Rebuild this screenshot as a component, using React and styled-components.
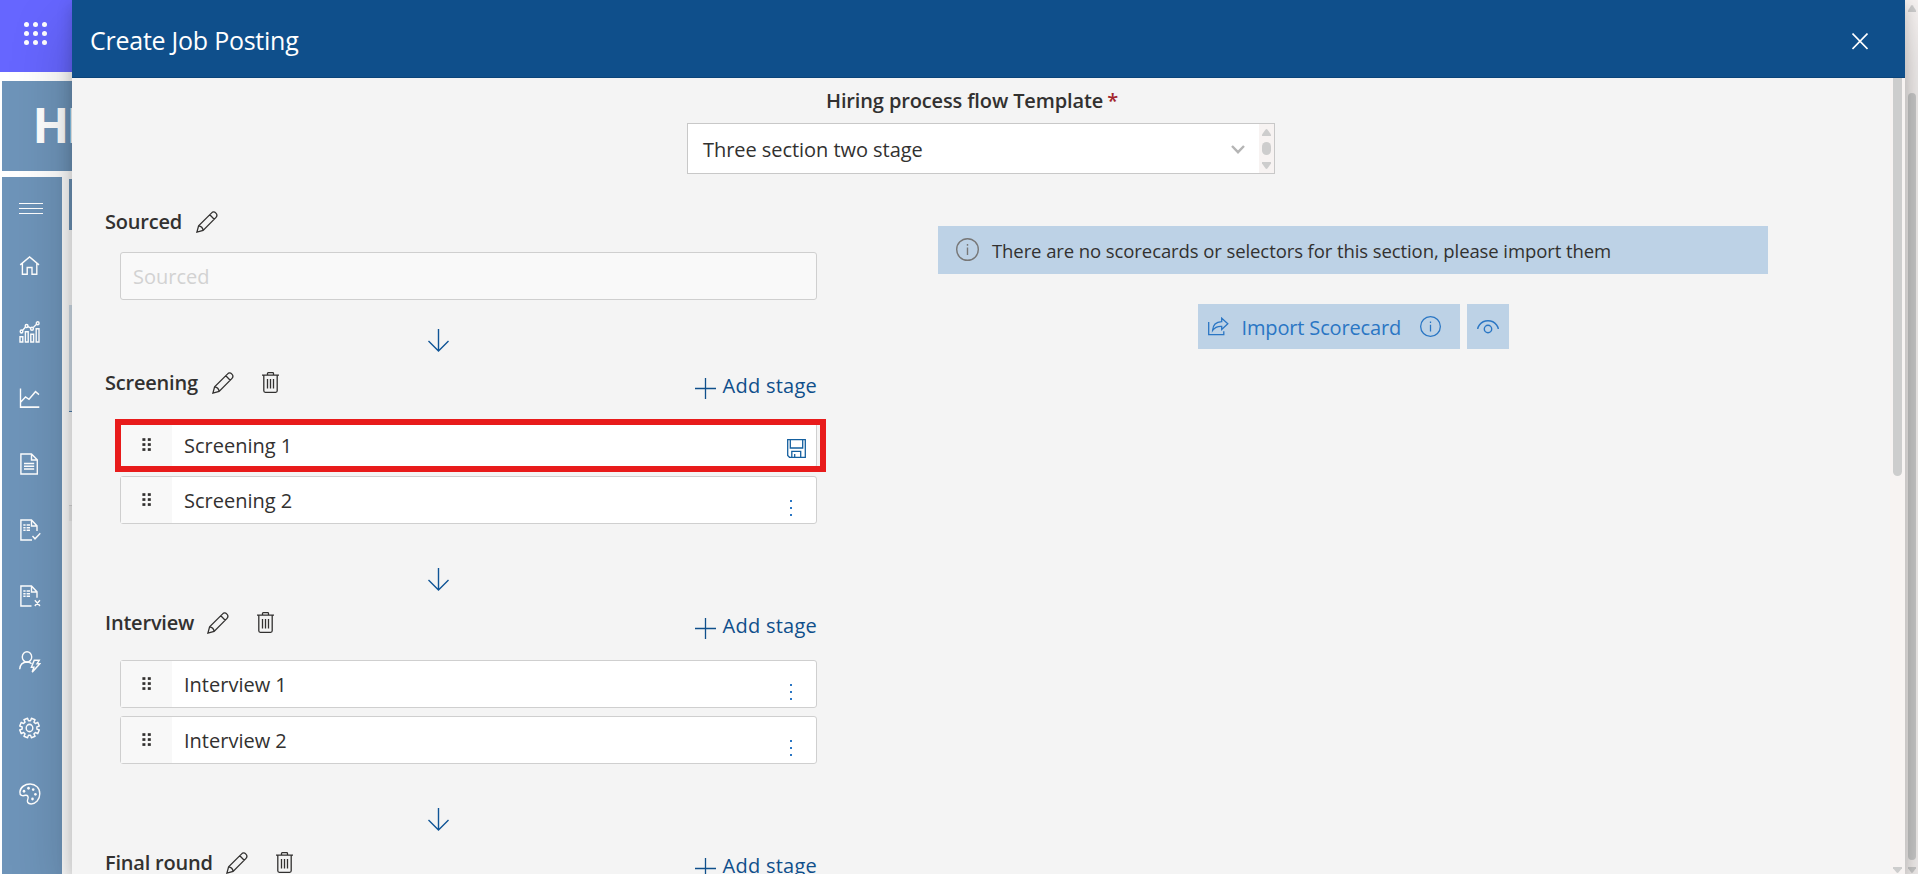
import React from 'react';
import styled, { createGlobalStyle } from 'styled-components';

const GlobalStyle = createGlobalStyle`
  *, *::before, *::after { box-sizing: border-box; }
  body {
    margin: 0;
    background: #fff;
    color: #323130;
    font-family: "Open Sans", "Noto Sans", sans-serif;
    font-size: 20px;
    overflow: hidden;
  }
  svg { display: block; flex: none; }
`;

/* ---------- page behind the panel ---------- */

const Page = styled.div`
  position: relative;
  width: 1918px;
  height: 874px;
  overflow: hidden;
  display: flex;
  justify-content: space-between;
`;

const Backdrop = styled.div`
  width: 84px;
  display: flex;
  flex-direction: column;
`;

const Launcher = styled.div`
  height: 72px;
  padding: 22px 0 0 24px;
  background: #6666ff;
`;

const Brand = styled.div`
  height: 90px;
  margin: 9px 0 6px 2px;
  padding-left: 30.5px;
  background: #6e94b9;
  color: #fff;
  font-weight: 700;
  font-size: 48px;
  line-height: 87px;
  letter-spacing: -3px;
  white-space: nowrap;
  overflow: hidden;
`;

const BackRow = styled.div`
  flex: 1;
  display: flex;
  gap: 7px;
  padding-left: 2px;
`;

const Nav = styled.nav`
  width: 60px;
  padding-left: 16px;
  background: #6e94b9;
  color: #fff;
  display: flex;
  flex-direction: column;
`;

const NavItem = styled.div`
  height: 66px;
  display: flex;
  align-items: center;
`;

const MenuToggle = styled(NavItem)`
  height: 56px;
  padding-top: 6px;
`;

const Sliver = styled.div`
  width: 15px;
  padding-top: 2px;
`;

const SliverBlock = styled.div`
  height: ${(p) => p.$height}px;
  background: ${(p) => p.$color || 'transparent'};
`;

/* ---------- scroll bars ---------- */

const Track = styled.div`
  width: ${(p) => p.$width}px;
  padding: ${(p) => p.$padding};
  background: #f7f3f2;
  display: flex;
  flex-direction: column;
  align-items: center;
  flex: none;
`;

const Thumb = styled.div`
  width: ${(p) => p.$width}px;
  height: ${(p) => p.$height}px;
  margin: ${(p) => p.$margin || 0};
  border-radius: ${(p) => p.$radius || '5px'};
  background: #cdcdcd;
`;

const Caret = ({ up, width = 8, height = 7 }) => (
  <svg width={width} height={height} viewBox="0 0 8 7" preserveAspectRatio="none" fill="#cdcdcd">
    {up ? <path d="M3.2 .5Q4-.5 4.8.5L8 5.5V7H0V5.5Z" /> : <path d="M0 0H8V1.5L4.8 6.5Q4 7.4 3.2 6.5L0 1.5Z" />}
  </svg>
);

/* ---------- panel ---------- */

const Panel = styled.section`
  position: absolute;
  top: 0;
  bottom: 0;
  left: 72px;
  right: 13px;
  background: #f4f4f4;
  box-shadow: 0 25.6px 57.6px rgba(0, 0, 0, 0.22), 0 4.8px 14.4px rgba(0, 0, 0, 0.18);
  display: flex;
  flex-direction: column;
`;

const PanelHeader = styled.header`
  height: 78px;
  padding: 5px 37px 0 18px;
  background: #0f4f8b;
  border-bottom: 1px solid #0b4479;
  color: #fff;
  display: flex;
  align-items: center;
  justify-content: space-between;
  flex: none;
`;

const Title = styled.h1`
  margin: 0 0 3px;
  font-weight: 400;
  font-size: 25px;
  line-height: 34px;
  letter-spacing: -0.25px;
`;

const PanelBody = styled.div`
  flex: 1;
  min-height: 0;
  display: flex;
`;

const Content = styled.div`
  flex: 1;
  overflow: hidden;
`;

const TemplateField = styled.div`
  width: 588px;
  margin-left: 615px;
  padding-top: 7px;
`;

const FieldLabel = styled.div`
  height: 38px;
  padding-left: 139px;
  font-weight: 600;
  line-height: 32px;
  letter-spacing: -0.13px;
  white-space: nowrap;

  span { color: #a4262c; margin-left: -1px; }
`;

const Select = styled.div`
  height: 51px;
  padding-left: 15px;
  border: 1px solid #c8c8c8;
  background: #fff;
  display: flex;
  align-items: stretch;
  letter-spacing: -0.05px;
  line-height: 52px;
`;

const SelectArrow = styled.div`
  margin-left: auto;
  padding: 21px 14px 0 0;
`;

const Columns = styled.div`
  display: flex;
  gap: 121px;
  padding: 32px 0 0 33px;
`;

const Stages = styled.div`
  width: 712px;
`;

const SectionHeader = styled.div`
  height: 31px;
  display: flex;
  align-items: center;
`;

const SectionName = styled.h2`
  margin: 0 14px 0 0;
  width: ${(p) => p.$width}px;
  font-weight: 600;
  font-size: 20px;
  line-height: 30px;
  letter-spacing: -0.2px;
  white-space: nowrap;
`;

const TrashSlot = styled.span`
  margin-left: 28px;
`;

const AddStage = styled.button`
  margin-left: auto;
  padding: 7px 0 0;
  border: 0;
  background: none;
  color: #0f4f8b;
  font: inherit;
  line-height: 30px;
  letter-spacing: 0.25px;
  display: flex;
  align-items: center;
  gap: 7px;

  svg { margin-top: 5px; }
`;

const StageList = styled.div`
  margin: 22px 0 0 15px;
  display: flex;
  flex-direction: column;
  gap: 8px;
`;

const StageRow = styled.div`
  position: relative;
  height: 48px;
  border: 1px solid #cfcfcf;
  border-radius: 3px;
  background: #fff;
  display: flex;
  line-height: ${(p) => (p.$editing ? 49 : 47)}px;
`;

const Grip = styled.div`
  width: 51px;
  margin-right: 12px;
  padding: ${(p) => (p.$editing ? 17 : 16)}px 0 0 21px;
  background: #f8f8f8;
`;

const StageAction = styled.div`
  margin-left: auto;
  padding: ${(p) => p.$padding};
`;

const Highlight = styled.div`
  position: absolute;
  top: -2px;
  left: -6px;
  width: 711px;
  height: 53px;
  border: 6px solid #e81b1b;
`;

const SourcedInput = styled.div`
  height: 48px;
  margin: 15px 0 0 15px;
  padding-left: 12px;
  border: 1px solid #cfcfcf;
  border-radius: 3px;
  background: #f9f9f9;
  color: #d2d2d2;
  line-height: 47px;
`;

const FlowArrow = styled.div`
  padding: ${(p) => p.$top}px 0 ${(p) => p.$bottom}px 323px;
`;

const Scorecards = styled.div`
  width: 830px;
  padding-top: 20px;
`;

const Notice = styled.div`
  height: 48px;
  padding-left: 18px;
  background: #bdd2e6;
  font-size: 18.5px;
  line-height: 49px;
  letter-spacing: -0.09px;
  white-space: nowrap;
  display: flex;
  gap: 13px;

  svg { margin-top: 12px; }
`;

const Actions = styled.div`
  margin-top: 30px;
  display: flex;
  justify-content: center;
  gap: 7px;
`;

const ActionButton = styled.button`
  width: ${(p) => p.$width}px;
  height: 45px;
  padding: 0 0 0 10px;
  border: 0;
  background: #bdd2e6;
  color: #2a76c4;
  font: inherit;
  letter-spacing: -0.15px;
  white-space: nowrap;
  display: flex;
  align-items: center;
`;

const ActionText = styled.span`
  margin: 3px 19px 0 13px;
  line-height: 30px;
`;

/* ---------- icons ---------- */

const Icon = ({ w, h, sw = 1.4, children }) => (
  <svg width={w} height={h} viewBox={`0 0 ${w} ${h}`} fill="none" stroke="currentColor" strokeWidth={sw}>
    {children}
  </svg>
);

const Waffle = () => (
  <svg width="23" height="23" fill="#fff">
    {[2.5, 11.5, 20.5].map((y) => [2.5, 11.5, 20.5].map((x) => <circle key={`${x}-${y}`} cx={x} cy={y} r="2.5" />))}
  </svg>
);

const Pencil = () => (
  <Icon w={22} h={22} sw={1.3}>
    <path d="M.9 21.1L2.6 14.9L15.4 2.1Q17.6-.2 19.9 2.1Q22 4.3 19.8 6.6L7.1 19.4ZM2.6 14.9Q6.6 15.4 7.1 19.4M13.8 3.8L18.2 8.2" />
  </Icon>
);

const Trash = () => (
  <Icon w={17} h={21} sw={1.3}>
    <path d="M0 3.2H17M5.5 3V1.5Q5.5.7 6.3.7H10.7Q11.5.7 11.5 1.5V3M1.8 3.2V18.8Q1.8 20.3 3.3 20.3H13.7Q15.2 20.3 15.2 18.8V3.2M5.5 7V16.5M8.5 7V16.5M11.5 7V16.5" />
  </Icon>
);

const Plus = () => (
  <Icon w={21} h={21} sw={1.3}><path d="M10.5 0V21M0 10.5H21" /></Icon>
);

const DownArrow = () => (
  <svg width="21" height="23" fill="none" stroke="#0f5496" strokeWidth="1.4">
    <path d="M10.5 0V22M.5 12L10.5 22L20.5 12" />
  </svg>
);

const GripDots = () => (
  <svg width="10" height="14" fill="#323130">
    {[0.2, 5.2, 10.2].map((y) => [0.4, 5.8].map((x) => <rect key={`${x}-${y}`} x={x} y={y} width="3" height="2.7" />))}
  </svg>
);

const More = () => (
  <svg width="2" height="16" fill="#2a76c4">
    <path d="M0 0H2V2H0ZM0 7H2V9H0ZM0 14H2V16H0Z" />
  </svg>
);

const Save = () => (
  <svg width="19" height="19" fill="none" stroke="#15609f" strokeWidth="1.3">
    <path d="M.7.7H18.3V18.3H2.5L.7 16.5ZM3.3.7V9H15.7V.7M4.8 18.3V12.3H13.7V18.3M7.7 15V18.3" />
  </svg>
);

const Info = ({ size, color }) => (
  <svg width={size} height={size} viewBox="0 0 23 23" fill="none" stroke={color} strokeWidth="1.4">
    <circle cx="11.5" cy="11.5" r="10.8" />
    <path d="M11.5 9.5V17M11.5 6V7.8" />
  </svg>
);

const Share = () => (
  <Icon w={21} h={19} sw={1.3}>
    <path d="M.7 5V17.7H15.8V14.2M4.6 13.4Q5 5.2 13.7 4.7V1.2L19.8 6.8L13.7 12.4V9.3Q7.5 9 4.6 13.4Z" />
  </Icon>
);

const Eye = () => (
  <Icon w={22} h={14} sw={1.4}>
    <path d="M.7 9Q1 6.8 2.4 5Q5.6.8 11 .8T19.6 5Q21 6.8 21.3 9" />
    <circle cx="11" cy="9" r="3.7" />
  </Icon>
);

const gearPath = (() => {
  const pts = [];
  for (let i = 0; i < 8; i += 1) {
    const a = (i * Math.PI) / 4 + Math.PI / 8;
    [[-0.25, 7.4], [-0.2, 10], [0.2, 10], [0.25, 7.4]].forEach(([d, r]) => {
      pts.push(`${(11.5 + r * Math.cos(a + d)).toFixed(2)} ${(10 + r * 0.91 * Math.sin(a + d)).toFixed(2)}`);
    });
  }
  return `M${pts.join('L')}Z`;
})();

const navIcons = {
  home: <path d="M2.2 8.9L11.6 .9L21 8.9M4.4 7.3V18.3H9.2V11.5H14V18.3H18.8V7.3" />,
  bars: (
    <>
      <path d="M2 14.3H4.8V19H2ZM7.4 9.8H10.2V19H7.4ZM12.8 12H15.6V19H12.8ZM18.2 7H21V19H18.2Z" />
      <path d="M4.5 8.6L7.3 5.7M9.9 5.1L12.8 6.4M15.3 5.9L18.5 3" />
      <circle cx="3.5" cy="9.5" r="1.3" /><circle cx="8.6" cy="4.5" r="1.4" />
      <circle cx="14" cy="7" r="1.4" /><circle cx="19.7" cy="2.1" r="1.4" />
    </>
  ),
  line: <path d="M2.5 1.3V18.3H21.3M2.8 13.6L7.5 9L11 11.2L17.5 4.2L21 7" />,
  doc: <path d="M2.9 .9H13.5L19.3 6.3V19.1H2.9ZM13.5 .9V6.3H19.3M6 9.6H16.2M6 12.1H16.2M6 14.6H16.2" />,
  check: <path d="M14 19.1H2.9V.9H13.5L19 6.3V11M13.5 .9V6.3H19M5.3 5.5H7.6M8.6 5.5H12M5.3 7.9H7.6M8.6 7.9H12M5.3 10.3H7.6M8.6 10.3H12M14.5 15.4L17 18L22.3 12.9" />,
  cross: <path d="M13.5 19.1H2.9V.9H13.5L19 6.3V11.5M13.5 .9V6.3H19M5.3 5.5H7.6M8.6 5.5H12M5.3 7.9H7.6M8.6 7.9H12M5.3 10.3H7.6M8.6 10.3H12M16.8 13.8L22 19M22 13.8L16.8 19" />,
  user: (
    <>
      <path d="M1.7 16.6Q2 10.2 9.3 10Q12 10 13.6 11.6" />
      <circle cx="9" cy="5.4" r="4.7" />
      <path d="M16.2 8.5H21.2L19 11.6H21.8L14.2 19.2L15.9 14.8H13.4Z" />
    </>
  ),
  gear: (
    <>
      <path d={gearPath} strokeLinejoin="round" />
      <circle cx="11.5" cy="10" r="3.3" />
    </>
  ),
  palette: (
    <>
      <path d="M1.9 8.2C2.2 3.8 6.9 1 12.1 1C17.7 1 21.8 4.6 21.8 9.8C21.8 15.2 17.7 19 13.1 19C9.7 19 8.7 17 9.8 14.8C10.8 12.7 9.7 10.7 7.4 11.2C4.5 12 1.6 11.5 1.9 8.2Z" />
      <g fill="#fff" stroke="none">
        <circle cx="6" cy="7.5" r="1.3" /><circle cx="10.5" cy="4.8" r="1.3" /><circle cx="15.2" cy="6" r="1.3" />
        <circle cx="17.4" cy="10.3" r="1.3" /><circle cx="14.5" cy="14.5" r="1.3" />
      </g>
    </>
  ),
};

const NavIcon = ({ name }) => (
  <svg
    width="23"
    height={name === 'home' ? 20 : 22}
    viewBox="0 0 23 20"
    preserveAspectRatio="none"
    fill="none"
    stroke="#fff"
    strokeWidth="1.4"
  >
    {navIcons[name]}
  </svg>
);

/* ---------- composition ---------- */

const sections = [
  { name: 'Screening', width: 93, stages: ['Screening 1', 'Screening 2'], editing: 'Screening 1' },
  { name: 'Interview', width: 88, stages: ['Interview 1', 'Interview 2'] },
  { name: 'Final round', width: 107, stages: [] },
];

const Stage = ({ name, editing }) => (
  <StageRow $editing={editing}>
    <Grip $editing={editing}><GripDots /></Grip>
    {name}
    <StageAction $padding={editing ? '18px 10px 0 0' : '23px 24px 0 0'}>
      {editing ? <Save /> : <More />}
    </StageAction>
    {editing && <Highlight />}
  </StageRow>
);

const Section = ({ name, width, stages, editing }) => (
  <>
    <SectionHeader>
      <SectionName $width={width}>{name}</SectionName>
      <Pencil />
      <TrashSlot><Trash /></TrashSlot>
      <AddStage><Plus />Add stage</AddStage>
    </SectionHeader>
    <StageList>
      {stages.map((s) => <Stage key={s} name={s} editing={s === editing} />)}
    </StageList>
  </>
);

export default function App() {
  return (
    <Page>
      <GlobalStyle />
      <Backdrop>
        <Launcher><Waffle /></Launcher>
        <Brand>HR</Brand>
        <BackRow>
          <Nav>
            <MenuToggle>
              <svg width="26" height="12" stroke="#fff" strokeWidth="1"><path d="M1 1.5H25M1 6.5H25M1 11.5H25" /></svg>
            </MenuToggle>
            {Object.keys(navIcons).map((name) => (
              <NavItem key={name}><NavIcon name={name} /></NavItem>
            ))}
          </Nav>
          <Sliver>
            <SliverBlock $height={51} $color="#6e94b9" />
            <SliverBlock $height={75} />
            <SliverBlock $height={106} $color="#d3e0ec" />
            <SliverBlock $height={1} $color="#4f7fae" />
            <SliverBlock $height={93} />
            <SliverBlock $height={1} $color="#dcdcdc" />
            <SliverBlock $height={15} $color="#f3f3f3" />
          </Sliver>
        </BackRow>
      </Backdrop>

      <Track $width={13} $padding="5px 0 1px 1px">
        <Caret up />
        <Thumb $width={8} $height={767} $margin="81px 0 7px" />
        <Caret height={6} />
      </Track>

      <Panel>
        <PanelHeader>
          <Title>Create Job Posting</Title>
          <svg width="16" height="17" stroke="#fff" strokeWidth="1.6"><path d="M.5.5L15.5 16M15.5.5L.5 16" /></svg>
        </PanelHeader>
        <PanelBody>
          <Content>
            <TemplateField>
              <FieldLabel>Hiring process flow Template <span>*</span></FieldLabel>
              <Select>
                Three section two stage
                <SelectArrow>
                  <svg width="14" height="9" fill="none" stroke="#b5b5b5" strokeWidth="2.4"><path d="M1 1L7 7.2L13 1" /></svg>
                </SelectArrow>
                <Track $width={15} $padding="5px 0 0">
                  <Caret up width={9} />
                  <Thumb $width={9} $height={13} $margin="6px 0 7px" />
                  <Caret width={9} />
                </Track>
              </Select>
            </TemplateField>
            <Columns>
              <Stages>
                <SectionHeader>
                  <SectionName $width={77}>Sourced</SectionName>
                  <Pencil />
                </SectionHeader>
                <SourcedInput>Sourced</SourcedInput>
                {sections.map((s, i) => (
                  <React.Fragment key={s.name}>
                    <FlowArrow $top={i === 0 ? 29 : 44} $bottom={i === 0 ? 15 : 16}><DownArrow /></FlowArrow>
                    <Section {...s} />
                  </React.Fragment>
                ))}
              </Stages>
              <Scorecards>
                <Notice>
                  <Info size={23} color="#777" />
                  There are no scorecards or selectors for this section, please import them
                </Notice>
                <Actions>
                  <ActionButton $width={262}>
                    <Share />
                    <ActionText>Import Scorecard</ActionText>
                    <Info size={21} color="#2a76c4" />
                  </ActionButton>
                  <ActionButton $width={42}><Eye /></ActionButton>
                </Actions>
              </Scorecards>
            </Columns>
          </Content>
          <Track $width={15} $padding="0 0 1px">
            <Thumb $width={9} $height={398} $margin="0 0 391px" $radius="0 0 5px 5px" />
            <Caret width={9} height={6} />
          </Track>
        </PanelBody>
      </Panel>
    </Page>
  );
}
